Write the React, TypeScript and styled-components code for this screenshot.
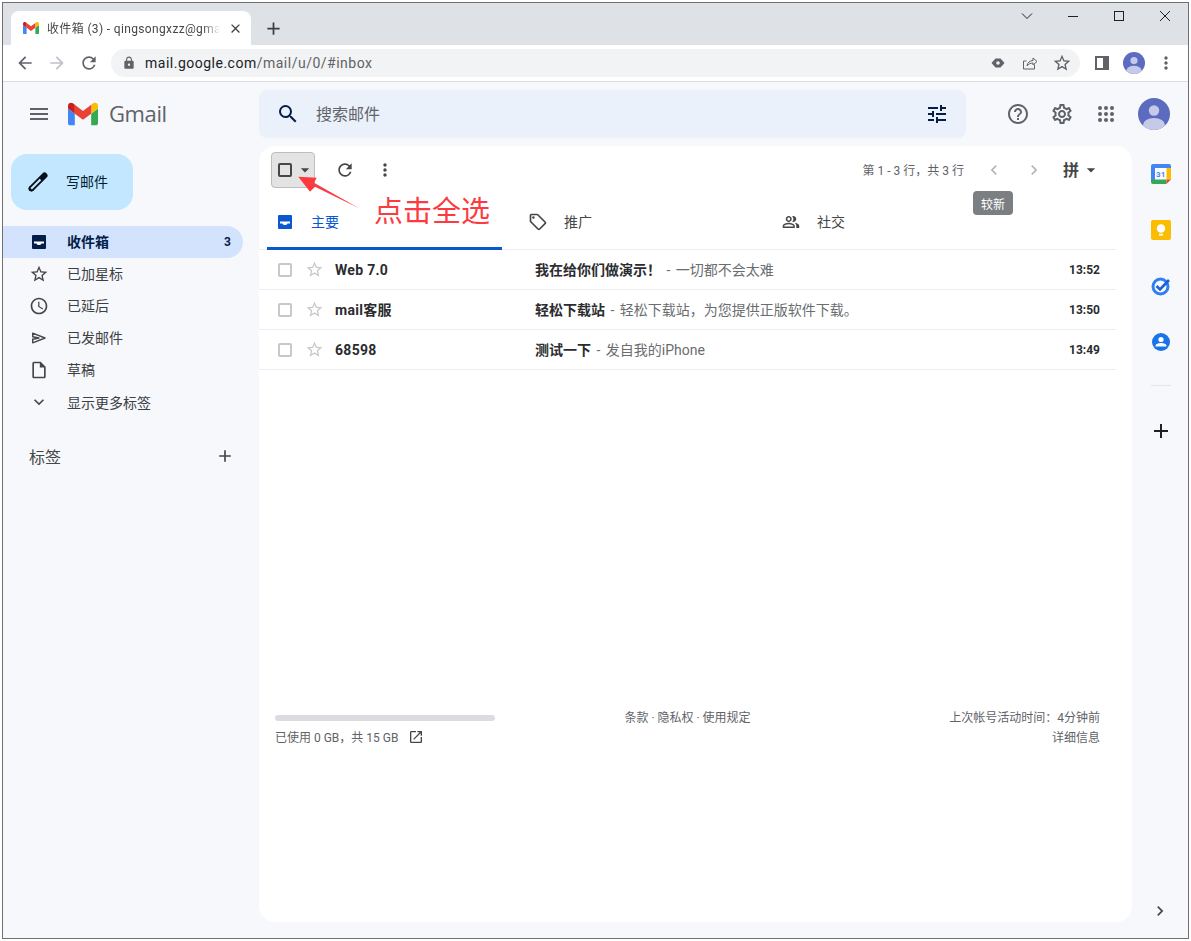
import React from 'react';
import styled, { createGlobalStyle } from 'styled-components';
import {
  MdAccessTime,
  MdAdd,
  MdArrowBack,
  MdArrowDropDown,
  MdArrowForward,
  MdChevronLeft,
  MdChevronRight,
  MdClose,
  MdExpandMore,
  MdHelpOutline,
  MdLock,
  MdMenu,
  MdMoreVert,
  MdOutlineInsertDriveFile,
  MdOutlineLocalOffer,
  MdOutlineOpenInNew,
  MdOutlinePeopleAlt,
  MdOutlineSettings,
  MdRefresh,
  MdSearch,
  MdStarBorder,
  MdTune,
} from 'react-icons/md';

/**
 * Styles
 */

const GlobalStyle = createGlobalStyle`
  html, body {
    margin: 0;
    padding: 0;
    background: #fff;
  }
  body {
    font-family: Roboto, "Noto Sans CJK SC", sans-serif;
    color: #202124;
  }
  * {
    box-sizing: border-box;
  }
`;

const Window = styled.div`
  width: 1187px;
  height: 937px;
  margin: 2px 0 0 2px;
  border: 1px solid #707070;
  display: flex;
  flex-direction: column;
  overflow: hidden;
`;

const TabStrip = styled.div`
  height: 42px;
  flex: none;
  background: #dee1e6;
  display: flex;
  align-items: flex-end;
  padding-left: 8px;
`;

const BrowserTab = styled.div`
  width: 240px;
  height: 34px;
  background: #fff;
  border-radius: 8px 8px 0 0;
  display: flex;
  align-items: center;
  padding: 0 8px 0 12px;
  gap: 8px;
  font-size: 12px;
  color: #45474a;
`;

const TabTitle = styled.div`
  flex: 1;
  overflow: hidden;
  white-space: nowrap;
  letter-spacing: 0.35px;
  padding-bottom: 1px;
  -webkit-mask-image: linear-gradient(to right, #000 90%, transparent);
  mask-image: linear-gradient(to right, #000 90%, transparent);
`;

const NewTabButton = styled.div`
  width: 28px;
  height: 28px;
  margin: 0 0 3px 8px;
  display: flex;
  align-items: center;
  justify-content: center;
  font-size: 21px;
  color: #3c4043;
`;

const WindowButtons = styled.div`
  margin-left: auto;
  align-self: flex-start;
  display: flex;
  height: 26px;
`;

const WindowButton = styled.div`
  width: 46px;
  height: 26px;
  display: flex;
  align-items: center;
  justify-content: center;
  color: #202124;
`;

const BrowserBar = styled.div`
  height: 37px;
  flex: none;
  background: #fff;
  border-bottom: 1px solid #dadce0;
  display: flex;
  align-items: center;
  padding: 0 0 0 6px;
`;

const BarIcon = styled.div<{ $muted?: boolean }>`
  width: 32px;
  height: 28px;
  display: flex;
  align-items: center;
  justify-content: center;
  font-size: 20px;
  color: ${({ $muted }) => ($muted ? '#bdc1c6' : '#5f6368')};
`;

const UrlBar = styled.div`
  width: 969px;
  height: 28px;
  margin-left: 6px;
  border-radius: 14px;
  background: #f1f3f4;
  display: flex;
  align-items: center;
  padding: 0 2px 0 11px;
  font-size: 14px;
  letter-spacing: 0.5px;
  color: #5f6368;
`;

const UrlHost = styled.span`
  color: #202124;
`;

const UrlText = styled.div`
  flex: 1;
  margin-left: 9px;
`;

const BrowserActions = styled.div`
  display: flex;
  align-items: center;
  margin-left: 6px;
`;

const Gmail = styled.div`
  flex: 1;
  min-height: 0;
  background: #f6f8fc;
  display: flex;
  flex-direction: column;
`;

const TopBar = styled.header`
  height: 64px;
  flex: none;
  display: flex;
  align-items: center;
`;

const Brand = styled.div`
  width: 256px;
  flex: none;
  display: flex;
  align-items: center;
  padding-left: 24px;
`;

const BrandName = styled.div`
  margin-left: 11px;
  padding-bottom: 2px;
  font-size: 22px;
  color: #5f6368;
  font-family: 'Open Sans', Roboto, sans-serif;
  letter-spacing: -0.4px;
`;

const MenuIcon = styled.div`
  display: flex;
  font-size: 24px;
  color: #5f6368;
  margin-right: 17px;
`;

const SearchBox = styled.div`
  width: 707px;
  height: 48px;
  flex: none;
  border-radius: 8px;
  background: #eaf1fb;
  display: flex;
  align-items: center;
  padding: 0 17px 0 17px;
  font-size: 16px;
  color: #5f6368;
`;

const SearchText = styled.div`
  flex: 1;
  margin-left: 16px;
  padding-bottom: 2px;
`;

const HeaderActions = styled.div`
  display: flex;
  align-items: center;
  margin-left: 40px;
  gap: 20px;
  color: #5f6368;
  font-size: 24px;
`;

const HeaderAction = styled.div`
  width: 24px;
  height: 24px;
  display: flex;
`;

const Body = styled.div`
  flex: 1;
  min-height: 0;
  display: flex;
`;

const Sidebar = styled.nav`
  width: 256px;
  flex: none;
  padding-top: 8px;
`;

const ComposeButton = styled.div`
  width: 122px;
  height: 56px;
  margin-left: 8px;
  border-radius: 16px;
  background: #c2e7ff;
  display: flex;
  align-items: center;
  padding-left: 16px;
  gap: 17px;
  font-size: 14px;
  color: #001d35;
`;

const ComposeLabel = styled.span`
  padding-bottom: 2px;
`;

const NavList = styled.div`
  margin-top: 16px;
  width: 240px;
`;

const NavRow = styled.div<{ $active?: boolean }>`
  height: 32px;
  display: flex;
  align-items: center;
  padding: 0 12px 0 26px;
  border-radius: 0 16px 16px 0;
  font-size: 14px;
  gap: 18px;
  background: ${({ $active }) => ($active ? '#d3e3fd' : 'transparent')};
  color: ${({ $active }) => ($active ? '#041e49' : '#3c4043')};
  font-weight: ${({ $active }) => ($active ? 700 : 400)};
`;

const NavLabel = styled.span<{ $flat?: boolean }>`
  padding-bottom: ${({ $flat }) => ($flat ? 0 : 2)}px;
`;

const NavIcon = styled.div`
  width: 20px;
  height: 20px;
  flex: none;
  display: flex;
  align-items: center;
  justify-content: center;
  font-size: 20px;
  color: #444746;
`;

const NavCount = styled.div`
  margin-left: auto;
  font-size: 12px;
`;

const LabelsHeader = styled.div`
  width: 240px;
  margin-top: 26px;
  padding: 0 8px 0 26px;
  display: flex;
  align-items: center;
  justify-content: space-between;
  font-size: 16px;
  color: #444746;
`;

const Main = styled.main`
  position: relative;
  width: 873px;
  height: 776px;
  flex: none;
  background: #fff;
  border-radius: 16px;
  display: flex;
  flex-direction: column;
`;

const Toolbar = styled.div`
  height: 48px;
  flex: none;
  width: 857px;
  display: flex;
  align-items: center;
  padding: 0 15px 0 12px;
  color: #444746;
`;

const SelectButton = styled.div`
  width: 44px;
  height: 36px;
  border: 1px solid #bdbdbd;
  border-radius: 4px;
  background: #e3e3e3;
  display: flex;
  align-items: center;
  padding-left: 6px;
`;

const SelectCaret = styled.div`
  display: flex;
  margin-left: 3px;
`;

const CheckBox = styled.div<{ $strong?: boolean }>`
  width: 14px;
  height: 14px;
  flex: none;
  border-radius: 2px;
  border: ${({ $strong }) => ($strong ? '2px solid #444746' : '2px solid #c8c8c8')};
`;

const ToolIcon = styled.div<{ $muted?: boolean }>`
  width: 20px;
  height: 20px;
  margin-left: 20px;
  display: flex;
  align-items: center;
  justify-content: center;
  font-size: 20px;
  color: ${({ $muted }) => ($muted ? '#b4b6b8' : '#444746')};
`;

const Pager = styled.div`
  margin-left: auto;
  padding-bottom: 2px;
  font-size: 12px;
  color: #5f6368;
`;

const InputGlyph = styled.div`
  font-size: 16px;
  font-weight: 700;
  margin-left: 19px;
  color: #444746;
  display: flex;
  align-items: center;
  gap: 2px;
`;

const InputChar = styled.span`
  padding-bottom: 2px;
`;

const TabsRow = styled.div`
  height: 54px;
  flex: none;
  width: 857px;
  margin-top: 2px;
  display: flex;
  padding-left: 8px;
  border-bottom: 1px solid #eceff1;
`;

const InboxTab = styled.div<{ $active?: boolean; $width: number }>`
  width: ${({ $width }) => $width}px;
  height: 54px;
  flex: none;
  display: flex;
  align-items: center;
  gap: ${({ $active }) => ($active ? 19 : 16)}px;
  padding-left: ${({ $active }) => ($active ? 11 : 26)}px;
  font-size: 14px;
  color: ${({ $active }) => ($active ? '#0b57d0' : '#444746')};
  border-bottom: 3px solid ${({ $active }) => ($active ? '#0b57d0' : 'transparent')};
`;

const TabIconBox = styled.div`
  display: flex;
  width: 20px;
  justify-content: center;
`;

const TabLabel = styled.span`
  padding-bottom: 2px;
`;

const MailRow = styled.div`
  height: 40px;
  width: 857px;
  display: flex;
  align-items: center;
  padding: 0 16px 0 19px;
  border-bottom: 1px solid #eceff1;
  font-size: 14px;
  line-height: 20px;
`;

const RowStar = styled.div`
  display: flex;
  margin-left: 13px;
  font-size: 19px;
  color: #c8c8c8;
`;

const Sender = styled.div`
  width: 200px;
  margin-left: 11px;
  font-weight: 700;
  letter-spacing: 0.3px;
  color: #2b2c2f;
`;

const Subject = styled.span`
  font-weight: 700;
  word-spacing: 0;
  color: #2b2c2f;
`;

const Snippet = styled.div`
  flex: 1;
  color: #6a6d70;
  white-space: pre;
  word-spacing: 2px;
`;

const MailTime = styled.div`
  font-size: 12px;
  font-weight: 700;
  color: #2b2c2f;
`;

const Footer = styled.footer`
  width: 857px;
  margin-top: 344px;
  padding: 0 16px;
  display: grid;
  grid-template-columns: 1fr 1fr 1fr;
  font-size: 12px;
  color: #5f6368;
`;

const StorageBar = styled.div`
  width: 220px;
  height: 6px;
  margin-top: 1px;
  border-radius: 3px;
  background: #dadce0;
`;

const StorageText = styled.div`
  margin-top: 7px;
  display: flex;
  align-items: center;
  gap: 10px;
`;

const FooterCenter = styled.div`
  text-align: center;
  margin-top: -6px;
`;

const FooterRight = styled.div`
  text-align: right;
  line-height: 20px;
  margin-top: -6px;
`;

const SideRail = styled.aside`
  flex: 1;
  display: flex;
  flex-direction: column;
  align-items: center;
  padding: 16px 0 0 2px;
  height: 776px;
`;

const RailIcon = styled.div`
  width: 24px;
  height: 24px;
  margin-bottom: 32px;
  display: flex;
  align-items: center;
  justify-content: center;
`;

const RailDivider = styled.div`
  width: 20px;
  height: 1px;
  background: #e3e5e8;
  margin-top: -1px;
`;

const RailAdd = styled.div`
  margin-top: 33px;
  display: flex;
  font-size: 24px;
  color: #202124;
`;

const RailExpand = styled.div`
  margin-top: auto;
  margin-right: 2px;
  margin-bottom: 1px;
  display: flex;
  font-size: 20px;
  color: #444746;
`;

const SortTip = styled.div`
  position: absolute;
  top: 45px;
  left: 714px;
  width: 40px;
  height: 24px;
  border-radius: 4px;
  background: #7b7f82;
  color: #fff;
  font-size: 12px;
  display: flex;
  align-items: center;
  justify-content: center;
`;

const CalloutText = styled.div`
  position: absolute;
  top: 46px;
  left: 115px;
  font-size: 29px;
  line-height: 40px;
  color: #fb3b3f;
  white-space: nowrap;
`;

const CalloutArrow = styled.svg`
  position: absolute;
  top: 28px;
  left: 36px;
`;

/**
 * Drawings
 */

function GmailLogo({ size }: { size: number }): JSX.Element {
  return (
    <svg width={size} height={size} viewBox="0 0 24 24">
      <path fill="#4285f4" d="M1.636 21.002h3.819V11.73L0 7.64v11.727c0 .904.732 1.636 1.636 1.636" />
      <path fill="#34a853" d="M18.545 21.002h3.819c.904 0 1.636-.732 1.636-1.636V7.64l-5.455 4.09" />
      <path fill="#fbbc04" d="M18.545 4.64v7.09L24 7.64V5.46c0-2.023-2.309-3.178-3.927-1.964" />
      <path fill="#ea4335" d="M5.455 11.73V4.64L12 9.55l6.545-4.91v7.09L12 16.64" />
      <path fill="#c5221f" d="M0 5.46v2.18l5.455 4.09V4.64L3.927 3.496C2.309 2.282 0 3.437 0 5.46" />
    </svg>
  );
}

function Avatar({ size }: { size: number }): JSX.Element {
  return (
    <svg width={size} height={size} viewBox="0 0 32 32">
      <clipPath id={`avatar-${size}`}>
        <circle cx="16" cy="16" r="16" />
      </clipPath>
      <g clipPath={`url(#avatar-${size})`}>
        <rect width="32" height="32" fill="#5c6bc0" />
        <circle cx="16" cy="12.5" r="5.2" fill="#c5cae9" />
        <ellipse cx="16" cy="27" rx="11" ry="7" fill="#c5cae9" />
      </g>
    </svg>
  );
}

function InboxGlyph({ color }: { color: string }): JSX.Element {
  return (
    <svg width="14" height="14" viewBox="0 0 14 14">
      <rect width="14" height="14" rx="1" fill={color} />
      <path fill="#fff" d="M2 6.500h10v2H9.500c-.4 1-1.400 1.600-2.500 1.600s-2.100-.6-2.500-1.600H2z" />
    </svg>
  );
}

function SendGlyph(): JSX.Element {
  return (
    <svg width="16" height="12" viewBox="0 0 16 12">
      <path d="M1.700 1.200L14 6 1.700 10.800V7.200L8 6 1.700 4.800z" fill="none" stroke="#444746" strokeWidth="1.400" strokeLinejoin="round" />
    </svg>
  );
}

function PencilGlyph(): JSX.Element {
  return (
    <svg width="22" height="22" viewBox="0 0 22 22">
      <path d="M4.500 17.500L17.500 4.500" stroke="#06101c" strokeWidth="6" strokeLinecap="round" />
      <path d="M2 20h5L2 15z" fill="#06101c" />
      <path d="M4.200 17.800L13.500 8.500" stroke="#c2e7ff" strokeWidth="2.200" />
    </svg>
  );
}

function AppsGrid(): JSX.Element {
  const dots = [4, 10, 16];
  return (
    <svg width="24" height="24" viewBox="0 0 24 24">
      {dots.map((y) =>
        dots.map((x) => <circle key={`${x}-${y}`} cx={x + 2} cy={y + 2} r="2" fill="#5f6368" />)
      )}
    </svg>
  );
}

function CalendarIcon(): JSX.Element {
  return (
    <svg width="20" height="20" viewBox="0 0 20 20">
      <rect x="0.500" y="0.500" width="19" height="19" rx="1.500" fill="#fff" />
      <path fill="#4285f4" d="M2 0h16a2 2 0 0 1 2 2v2H4v12H0V2a2 2 0 0 1 2-2z" />
      <path fill="#fbbc04" d="M15.500 4H20v11.500h-4.500z" />
      <path fill="#34a853" d="M0 15.500h15.500V20H2a2 2 0 0 1-2-2z" />
      <path fill="#ea4335" d="M15.500 15.500H20L15.500 20z" />
      <text x="9.700" y="13" fontSize="8" fontWeight="700" fill="#4285f4" textAnchor="middle" fontFamily="Roboto, sans-serif">
        31
      </text>
    </svg>
  );
}

function KeepIcon(): JSX.Element {
  return (
    <svg width="20" height="20" viewBox="0 0 20 20">
      <rect width="20" height="20" rx="2" fill="#fbbc04" />
      <circle cx="10" cy="8.500" r="4.200" fill="#fff" />
      <rect x="8" y="13.800" width="4" height="1.800" fill="#fff" />
    </svg>
  );
}

function TasksIcon(): JSX.Element {
  return (
    <svg width="20" height="20" viewBox="0 0 20 20">
      <circle cx="9.500" cy="10.500" r="7.500" fill="none" stroke="#2f7ff0" strokeWidth="3" />
      <path d="M5.500 10l3.500 3.500L18 4" fill="none" stroke="#1a5fd8" strokeWidth="2.600" />
    </svg>
  );
}

function ContactsIcon(): JSX.Element {
  return (
    <svg width="20" height="20" viewBox="0 0 20 20">
      <circle cx="10" cy="10" r="9" fill="#1a73e8" />
      <circle cx="10" cy="7.500" r="2.600" fill="#fff" />
      <path d="M4.500 14c0-2.200 3.500-3 5.500-3s5.500.8 5.500 3v.6h-11z" fill="#fff" />
    </svg>
  );
}

const navItems = [
  { label: '已加星标', icon: <MdStarBorder /> },
  { label: '已延后', icon: <MdAccessTime /> },
  { label: '已发邮件', icon: <SendGlyph /> },
  { label: '草稿', icon: <MdOutlineInsertDriveFile /> },
  { label: '显示更多标签', icon: <MdExpandMore />, flat: true },
];

// full-width punctuation is written as escapes so it can't get swapped for the ascii one
const mails = [
  { sender: 'Web 7.0', subject: '我在给你们做演示\uFF01', snippet: ' - 一切都不会太难', time: '13:52' },
  { sender: 'mail客服', subject: '轻松下载站', snippet: ' - 轻松下载站\uFF0C为您提供正版软件下载。', time: '13:50' },
  { sender: '68598', subject: '测试一下', snippet: ' - 发自我的iPhone', time: '13:49' },
];

/**
 * Component
 */

export default function App(): JSX.Element {
  return (
    <>
      <GlobalStyle />
      <Window>
        <TabStrip>
          <BrowserTab>
            <GmailLogo size={16} />
            <TabTitle>收件箱 (3) - qingsongxzz@gma</TabTitle>
            <MdClose size={15} color="#3c4043" />
          </BrowserTab>
          <NewTabButton>
            <MdAdd />
          </NewTabButton>
          <WindowButtons>
            <WindowButton>
              <svg width="12" height="12" viewBox="0 0 12 12">
                <path d="M1 3.500l5 5 5-5" fill="none" stroke="#202124" />
              </svg>
            </WindowButton>
            <WindowButton>
              <svg width="10" height="10" viewBox="0 0 10 10">
                <path d="M0 5.500h10" stroke="#202124" />
              </svg>
            </WindowButton>
            <WindowButton>
              <svg width="10" height="10" viewBox="0 0 10 10">
                <rect x="0.500" y="0.500" width="9" height="9" fill="none" stroke="#202124" />
              </svg>
            </WindowButton>
            <WindowButton>
              <svg width="10" height="10" viewBox="0 0 10 10">
                <path d="M0 0l10 10M10 0L0 10" stroke="#202124" />
              </svg>
            </WindowButton>
          </WindowButtons>
        </TabStrip>
        <BrowserBar>
          <BarIcon>
            <MdArrowBack />
          </BarIcon>
          <BarIcon $muted>
            <MdArrowForward />
          </BarIcon>
          <BarIcon>
            <MdRefresh />
          </BarIcon>
          <UrlBar>
            <MdLock size={14} color="#5f6368" />
            <UrlText>
              <UrlHost>mail.google.com</UrlHost>/mail/u/0/#inbox
            </UrlText>
            <BarIcon>
              <svg width="14" height="14" viewBox="0 0 14 14">
                <path d="M0.500 7L4.500 2.500h5L13.500 7l-4 4.500h-5z" fill="#5f6368" />
                <circle cx="7" cy="7" r="1.800" fill="#f1f3f4" />
              </svg>
            </BarIcon>
            <BarIcon>
              <svg width="16" height="16" viewBox="0 0 16 16">
                <path d="M12.500 9.500V14h-11V6h3" fill="none" stroke="#5f6368" />
                <path d="M5 11c.5-3.500 3-5.500 6-5.500V3l4 3.500L11 10V8c-2.500 0-4.500 1-6 3z" fill="none" stroke="#5f6368" />
              </svg>
            </BarIcon>
            <BarIcon>
              <MdStarBorder />
            </BarIcon>
          </UrlBar>
          <BrowserActions>
            <BarIcon>
              <svg width="14" height="14" viewBox="0 0 14 14">
                <path d="M0 0h14v14H0z M2 2v10h6V2z" fillRule="evenodd" fill="#5f6368" />
              </svg>
            </BarIcon>
            <BarIcon>
              <Avatar size={22} />
            </BarIcon>
            <BarIcon>
              <MdMoreVert />
            </BarIcon>
          </BrowserActions>
        </BrowserBar>
        <Gmail>
          <TopBar>
            <Brand>
              <MenuIcon>
                <MdMenu />
              </MenuIcon>
              <GmailLogo size={30} />
              <BrandName>Gmail</BrandName>
            </Brand>
            <SearchBox>
              <MdSearch size={24} color="#041e49" />
              <SearchText>搜索邮件</SearchText>
              <MdTune size={24} color="#041e49" />
            </SearchBox>
            <HeaderActions>
              <HeaderAction>
                <MdHelpOutline />
              </HeaderAction>
              <HeaderAction>
                <MdOutlineSettings />
              </HeaderAction>
              <HeaderAction>
                <AppsGrid />
              </HeaderAction>
              <Avatar size={32} />
            </HeaderActions>
          </TopBar>
          <Body>
            <Sidebar>
              <ComposeButton>
                <PencilGlyph />
                <ComposeLabel>写邮件</ComposeLabel>
              </ComposeButton>
              <NavList>
                <NavRow $active>
                  <NavIcon>
                    <InboxGlyph color="#041e49" />
                  </NavIcon>
                  <NavLabel>收件箱</NavLabel>
                  <NavCount>3</NavCount>
                </NavRow>
                {navItems.map((item) => (
                  <NavRow key={item.label}>
                    <NavIcon>{item.icon}</NavIcon>
                    <NavLabel $flat={item.flat}>{item.label}</NavLabel>
                  </NavRow>
                ))}
              </NavList>
              <LabelsHeader>
                标签
                <MdAdd size={20} color="#444746" />
              </LabelsHeader>
            </Sidebar>
            <Main>
              <Toolbar>
                <SelectButton>
                  <CheckBox $strong />
                  <SelectCaret>
                    <MdArrowDropDown size={20} color="#444746" />
                  </SelectCaret>
                </SelectButton>
                <ToolIcon>
                  <MdRefresh />
                </ToolIcon>
                <ToolIcon>
                  <MdMoreVert />
                </ToolIcon>
                <Pager>{'第 1 - 3 行\uFF0C共 3 行'}</Pager>
                <ToolIcon $muted>
                  <MdChevronLeft />
                </ToolIcon>
                <ToolIcon $muted>
                  <MdChevronRight />
                </ToolIcon>
                <InputGlyph>
                  <InputChar>拼</InputChar>
                  <MdArrowDropDown size={20} color="#444746" />
                </InputGlyph>
              </Toolbar>
              <TabsRow>
                <InboxTab $active $width={235}>
                  <InboxGlyph color="#0b57d0" />
                  <TabLabel>主要</TabLabel>
                </InboxTab>
                <InboxTab $width={253}>
                  <TabIconBox>
                    <MdOutlineLocalOffer size={20} color="#444746" />
                  </TabIconBox>
                  <TabLabel>推广</TabLabel>
                </InboxTab>
                <InboxTab $width={253}>
                  <TabIconBox>
                    <MdOutlinePeopleAlt size={18} color="#444746" />
                  </TabIconBox>
                  <TabLabel>社交</TabLabel>
                </InboxTab>
              </TabsRow>
              {mails.map((mail) => (
                <MailRow key={mail.time}>
                  <CheckBox />
                  <RowStar>
                    <MdStarBorder />
                  </RowStar>
                  <Sender>{mail.sender}</Sender>
                  <Snippet>
                    <Subject>{mail.subject}</Subject>
                    {mail.snippet}
                  </Snippet>
                  <MailTime>{mail.time}</MailTime>
                </MailRow>
              ))}
              <Footer>
                <div>
                  <StorageBar />
                  <StorageText>
                    {'已使用 0 GB\uFF0C共 15 GB'}
                    <MdOutlineOpenInNew size={16} color="#444746" />
                  </StorageText>
                </div>
                <FooterCenter>条款 · 隐私权 · 使用规定</FooterCenter>
                <FooterRight>
                  {'上次帐号活动时间\uFF1A4分钟前'}
                  <br />
                  详细信息
                </FooterRight>
              </Footer>
              <SortTip>较新</SortTip>
              <CalloutArrow width="70" height="40" viewBox="0 0 70 40">
                <path d="M3.300 2.700L21.700 3.700 19 8.700 64 34.300 20 12.700 15 17.700z" fill="#fb3b3f" />
              </CalloutArrow>
              <CalloutText>点击全选</CalloutText>
            </Main>
            <SideRail>
              <RailIcon>
                <CalendarIcon />
              </RailIcon>
              <RailIcon>
                <KeepIcon />
              </RailIcon>
              <RailIcon>
                <TasksIcon />
              </RailIcon>
              <RailIcon>
                <ContactsIcon />
              </RailIcon>
              <RailDivider />
              <RailAdd>
                <MdAdd />
              </RailAdd>
              <RailExpand>
                <MdChevronRight />
              </RailExpand>
            </SideRail>
          </Body>
        </Gmail>
      </Window>
    </>
  );
}
